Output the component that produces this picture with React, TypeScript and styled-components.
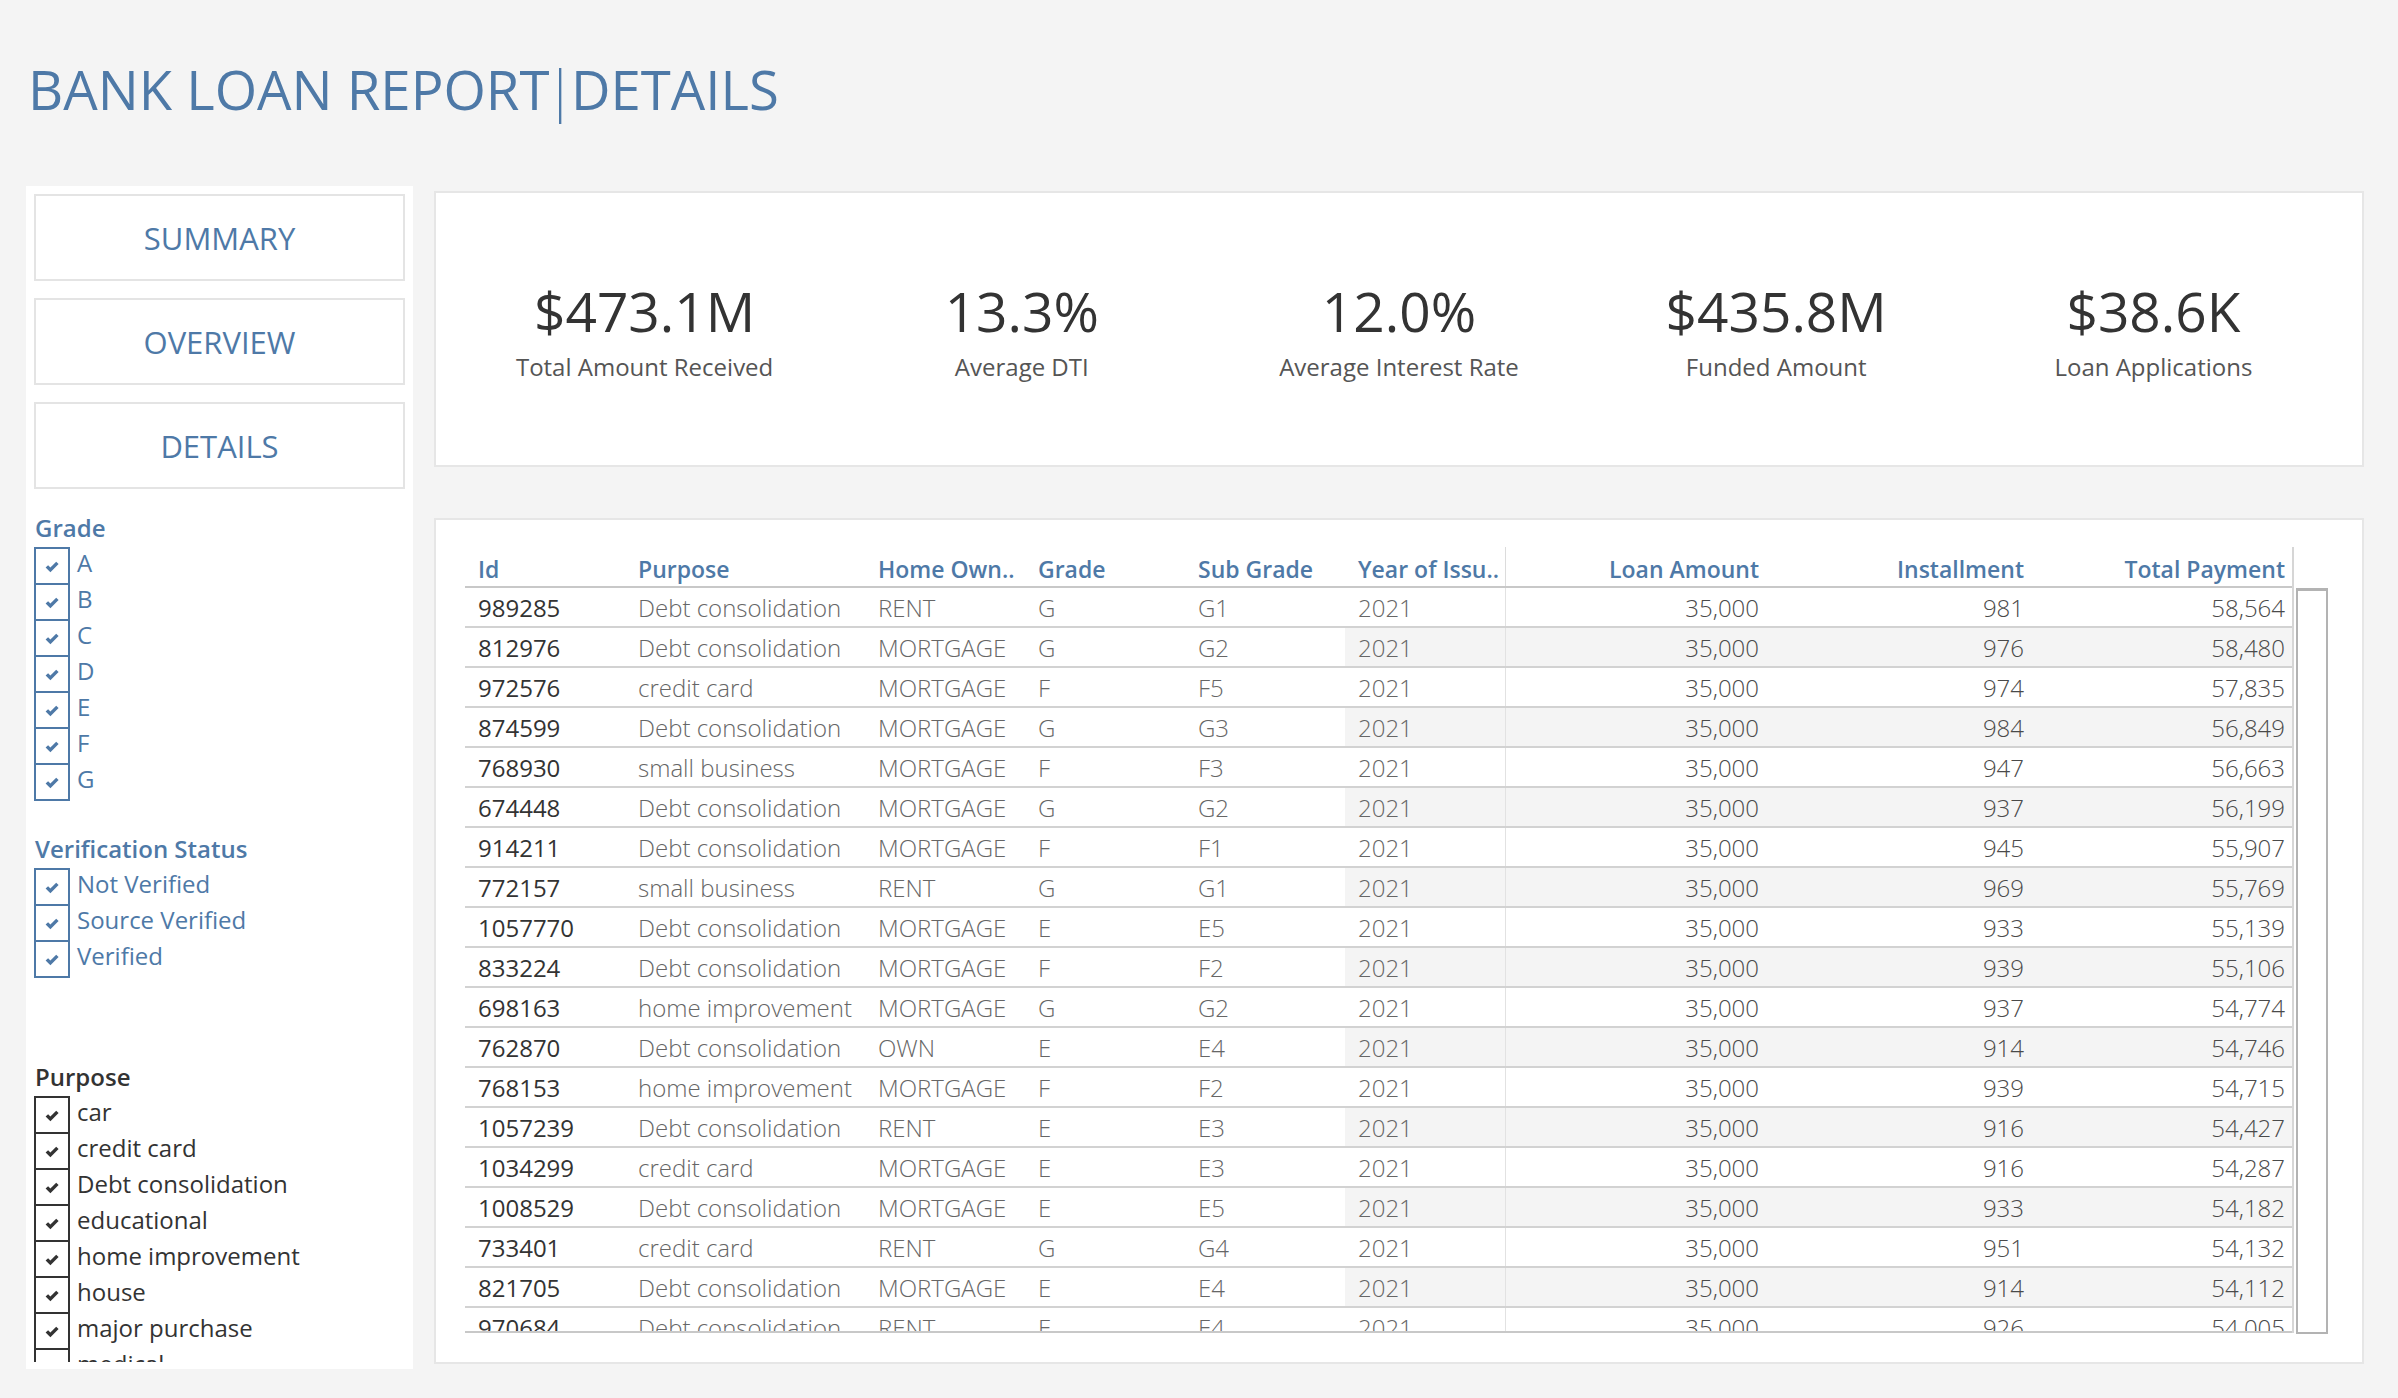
import * as React from 'react';
import styled, { createGlobalStyle } from 'styled-components';

const BLUE = '#4e79a7';

type Loan = {
  id: string;
  purpose: string;
  home: string;
  grade: string;
  sub: string;
  year: string;
  amount: string;
  installment: string;
  payment: string;
};

const loans: Loan[] = [
  ['989285', 'Debt consolidation', 'RENT', 'G', 'G1', '981', '58,564'],
  ['812976', 'Debt consolidation', 'MORTGAGE', 'G', 'G2', '976', '58,480'],
  ['972576', 'credit card', 'MORTGAGE', 'F', 'F5', '974', '57,835'],
  ['874599', 'Debt consolidation', 'MORTGAGE', 'G', 'G3', '984', '56,849'],
  ['768930', 'small business', 'MORTGAGE', 'F', 'F3', '947', '56,663'],
  ['674448', 'Debt consolidation', 'MORTGAGE', 'G', 'G2', '937', '56,199'],
  ['914211', 'Debt consolidation', 'MORTGAGE', 'F', 'F1', '945', '55,907'],
  ['772157', 'small business', 'RENT', 'G', 'G1', '969', '55,769'],
  ['1057770', 'Debt consolidation', 'MORTGAGE', 'E', 'E5', '933', '55,139'],
  ['833224', 'Debt consolidation', 'MORTGAGE', 'F', 'F2', '939', '55,106'],
  ['698163', 'home improvement', 'MORTGAGE', 'G', 'G2', '937', '54,774'],
  ['762870', 'Debt consolidation', 'OWN', 'E', 'E4', '914', '54,746'],
  ['768153', 'home improvement', 'MORTGAGE', 'F', 'F2', '939', '54,715'],
  ['1057239', 'Debt consolidation', 'RENT', 'E', 'E3', '916', '54,427'],
  ['1034299', 'credit card', 'MORTGAGE', 'E', 'E3', '916', '54,287'],
  ['1008529', 'Debt consolidation', 'MORTGAGE', 'E', 'E5', '933', '54,182'],
  ['733401', 'credit card', 'RENT', 'G', 'G4', '951', '54,132'],
  ['821705', 'Debt consolidation', 'MORTGAGE', 'E', 'E4', '914', '54,112'],
  ['970684', 'Debt consolidation', 'RENT', 'E', 'E4', '926', '54,005'],
].map(([id, purpose, home, grade, sub, installment, payment]) => ({
  id,
  purpose,
  home,
  grade,
  sub,
  year: '2021',
  amount: '35,000',
  installment,
  payment,
}));

type Column = {
  key: keyof Loan;
  label: string;
  width: number;
  align: 'left' | 'right';
  pad: number;
  kind: 'id' | 'dim' | 'measure';
};

const columns: Column[] = [
  { key: 'id', label: 'Id', width: 160, align: 'left', pad: 13, kind: 'id' },
  { key: 'purpose', label: 'Purpose', width: 240, align: 'left', pad: 13, kind: 'dim' },
  { key: 'home', label: 'Home Own..', width: 160, align: 'left', pad: 13, kind: 'dim' },
  { key: 'grade', label: 'Grade', width: 160, align: 'left', pad: 13, kind: 'dim' },
  { key: 'sub', label: 'Sub Grade', width: 160, align: 'left', pad: 13, kind: 'dim' },
  { key: 'year', label: 'Year of Issu..', width: 161, align: 'left', pad: 13, kind: 'dim' },
  { key: 'amount', label: 'Loan Amount', width: 265, align: 'right', pad: 12, kind: 'measure' },
  { key: 'installment', label: 'Installment', width: 265, align: 'right', pad: 12, kind: 'measure' },
  { key: 'payment', label: 'Total Payment', width: 256, align: 'right', pad: 7, kind: 'measure' },
];

const gridTemplate = columns.map((c) => `${c.width}px`).join(' ');
const YEAR_INDEX = 5;

const kpis = [
  { value: '$473.1M', label: 'Total Amount Received' },
  { value: '13.3%', label: 'Average DTI' },
  { value: '12.0%', label: 'Average Interest Rate' },
  { value: '$435.8M', label: 'Funded Amount' },
  { value: '$38.6K', label: 'Loan Applications' },
];

const filters = [
  { title: 'Grade', color: BLUE, items: ['A', 'B', 'C', 'D', 'E', 'F', 'G'], gap: 22 },
  {
    title: 'Verification Status',
    color: BLUE,
    items: ['Not Verified', 'Source Verified', 'Verified'],
    gap: 31,
  },
  {
    title: 'Purpose',
    color: '#333333',
    items: [
      'car',
      'credit card',
      'Debt consolidation',
      'educational',
      'home improvement',
      'house',
      'major purchase',
      'medical',
      'moving',
      'other',
    ],
    gap: 82,
  },
];

function Check({ color }: { color: string }) {
  return (
    <svg width="16" height="16" viewBox="0 0 16 16">
      <path d="M1.6 8.6 L4.1 6.2 L6.4 8.5 L12.2 2.7 L14.6 5.1 L6.4 13.3 Z" fill={color} />
    </svg>
  );
}

export default function App() {
  return (
    <Page>
      <GlobalStyle />
      <Title>
        BANK LOAN REPORT<Bar>|</Bar>DETAILS
      </Title>
      <Layout>
        <Sidebar>
          <NavButton>SUMMARY</NavButton>
          <NavButton>OVERVIEW</NavButton>
          <NavButton>DETAILS</NavButton>
          {filters.map((f, i) => {
            const grow = i === filters.length - 1;
            return (
              <FilterGroup key={f.title} $gap={f.gap} $grow={grow}>
                <FilterTitle $color={f.color}>{f.title}</FilterTitle>
                <CheckList $grow={grow}>
                  {f.items.map((item) => (
                    <CheckRow key={item}>
                      <CheckBox $color={f.color}>
                        <Check color={f.color} />
                      </CheckBox>
                      <CheckLabel $color={f.color}>{item}</CheckLabel>
                    </CheckRow>
                  ))}
                </CheckList>
              </FilterGroup>
            );
          })}
        </Sidebar>
        <Main>
          <KpiCard>
            {kpis.map((k) => (
              <Kpi key={k.label}>
                <KpiValue>{k.value}</KpiValue>
                <KpiLabel>{k.label}</KpiLabel>
              </Kpi>
            ))}
          </KpiCard>
          <TableCard>
            <Table>
              <HeaderRow>
                {columns.map((c, i) => (
                  <HeaderCell key={c.key} $align={c.align} $pad={c.pad} $divider={i === YEAR_INDEX}>
                    {c.label}
                  </HeaderCell>
                ))}
              </HeaderRow>
              <TableBody>
                {loans.map((row, r) => (
                  <Row key={row.id}>
                    {columns.map((c, i) => (
                      <Cell
                        key={c.key}
                        $align={c.align}
                        $pad={c.pad}
                        $kind={c.kind}
                        $divider={i === YEAR_INDEX}
                        $shade={r % 2 === 1 && i >= YEAR_INDEX}
                      >
                        {row[c.key]}
                      </Cell>
                    ))}
                  </Row>
                ))}
              </TableBody>
            </Table>
            <ScrollBar />
          </TableCard>
        </Main>
      </Layout>
    </Page>
  );
}

const GlobalStyle = createGlobalStyle`
  body {
    margin: 0;
    background: #f4f4f4;
    font-family: 'Open Sans', 'Liberation Sans', sans-serif;
  }
  * {
    box-sizing: border-box;
  }
`;

const Page = styled.div`
  width: 2398px;
  height: 1398px;
  padding-left: 26px;
  overflow: hidden;
`;

const Title = styled.h1`
  margin: 0;
  padding: 57px 0 0 2px;
  font-size: 54.5px;
  line-height: 64px;
  font-weight: 400;
  color: ${BLUE};
  white-space: nowrap;
`;

const Bar = styled.span`
  margin: 0 -4px 0 -4px;
  font-weight: 300;
`;

const Layout = styled.div`
  display: flex;
  gap: 21px;
  margin-top: 65px;
`;

const Sidebar = styled.aside`
  width: 387px;
  height: 1183px;
  background: #ffffff;
  padding: 8px 8px 7px;
  display: flex;
  flex-direction: column;
`;

const NavButton = styled.div`
  height: 87px;
  flex-shrink: 0;
  border: 2px solid #e4e4e4;
  display: flex;
  align-items: center;
  justify-content: center;
  font-size: 31px;
  color: ${BLUE};

  & + & {
    margin-top: 17px;
  }
`;

const FilterGroup = styled.div<{ $gap: number; $grow: boolean }>`
  margin-top: ${({ $gap }) => $gap}px;
  display: flex;
  flex-direction: column;
  flex: ${({ $grow }) => ($grow ? '1 1 0' : '0 0 auto')};
  min-height: 0;
`;

const FilterTitle = styled.div<{ $color: string }>`
  font-size: 24px;
  line-height: 34px;
  font-weight: 600;
  color: ${({ $color }) => $color};
  padding-left: 1px;
  margin-bottom: 2px;
  white-space: nowrap;
`;

const CheckList = styled.div<{ $grow: boolean }>`
  display: flex;
  flex-direction: column;
  flex: ${({ $grow }) => ($grow ? '1 1 0' : '0 0 auto')};
  min-height: 0;
  overflow: hidden;
`;

const CheckRow = styled.div`
  display: flex;
  align-items: flex-start;
  height: 36px;
  flex-shrink: 0;

  &:last-child {
    height: 38px;
  }
`;

const CheckBox = styled.div<{ $color: string }>`
  width: 36px;
  height: 100%;
  border: 2px solid ${({ $color }) => $color};
  border-bottom: none;
  display: flex;
  align-items: center;
  justify-content: center;
  padding-top: 1px;

  ${CheckRow}:last-child & {
    border-bottom: 2px solid ${({ $color }) => $color};
  }
`;

const CheckLabel = styled.span<{ $color: string }>`
  margin-left: 7px;
  font-size: 24px;
  line-height: 32px;
  color: ${({ $color }) => $color};
  white-space: nowrap;
`;

const Main = styled.main`
  width: 1930px;
  padding-top: 5px;
  display: flex;
  flex-direction: column;
  gap: 51px;
`;

const KpiCard = styled.section`
  height: 276px;
  background: #ffffff;
  border: 2px solid #e6e6e6;
  padding: 0 20px;
  display: grid;
  grid-template-columns: repeat(5, 1fr);
  align-items: center;
`;

const Kpi = styled.div`
  text-align: center;
  padding-top: 3px;
`;

const KpiValue = styled.div`
  font-size: 55px;
  line-height: 66px;
  color: #333333;
`;

const KpiLabel = styled.div`
  margin-top: 7px;
  font-size: 24px;
  line-height: 32px;
  color: #555555;
`;

const TableCard = styled.section`
  height: 846px;
  background: #ffffff;
  border: 2px solid #e6e6e6;
  padding: 27px 0 0 29px;
  display: flex;
  align-items: flex-start;
`;

const Table = styled.div`
  width: 1829px;
  border-right: 2px solid #d6d6d6;
  display: flex;
  flex-direction: column;
`;

const HeaderRow = styled.div`
  display: grid;
  grid-template-columns: ${gridTemplate};
  height: 41px;
  border-bottom: 2px solid #c8c8c8;
`;

const HeaderCell = styled.div<{ $align: string; $pad: number; $divider: boolean }>`
  padding: 6px ${({ $pad }) => $pad}px 0;
  font-size: 23px;
  line-height: 33px;
  font-weight: 600;
  color: ${BLUE};
  text-align: ${({ $align }) => $align};
  white-space: nowrap;
  border-right: ${({ $divider }) => ($divider ? '1px solid #dcdcdc' : 'none')};
`;

const TableBody = styled.div`
  height: 745px;
  overflow: hidden;
  border-bottom: 2px solid #c8c8c8;
`;

const Row = styled.div`
  display: grid;
  grid-template-columns: ${gridTemplate};
  height: 40px;
  border-bottom: 2px solid #d2d2d2;
`;

const cellColor = { id: '#333333', dim: '#666666', measure: '#4a4a4a' };

const Cell = styled.div<{
  $align: string;
  $pad: number;
  $kind: 'id' | 'dim' | 'measure';
  $divider: boolean;
  $shade: boolean;
}>`
  padding: 2px ${({ $pad }) => $pad}px 0;
  font-size: 24px;
  line-height: 36px;
  font-weight: ${({ $kind }) => ($kind === 'id' ? 400 : 300)};
  color: ${({ $kind }) => cellColor[$kind]};
  text-align: ${({ $align }) => $align};
  white-space: nowrap;
  background: ${({ $shade }) => ($shade ? '#f4f4f4' : 'transparent')};
  border-right: ${({ $divider }) => ($divider ? '1px solid #e2e2e2' : 'none')};
`;

const ScrollBar = styled.div`
  width: 32px;
  height: 746px;
  margin: 41px 0 0 2px;
  border: 2px solid #b3b3b3;
  border-top-width: 3px;
  background: #ffffff;
`;
